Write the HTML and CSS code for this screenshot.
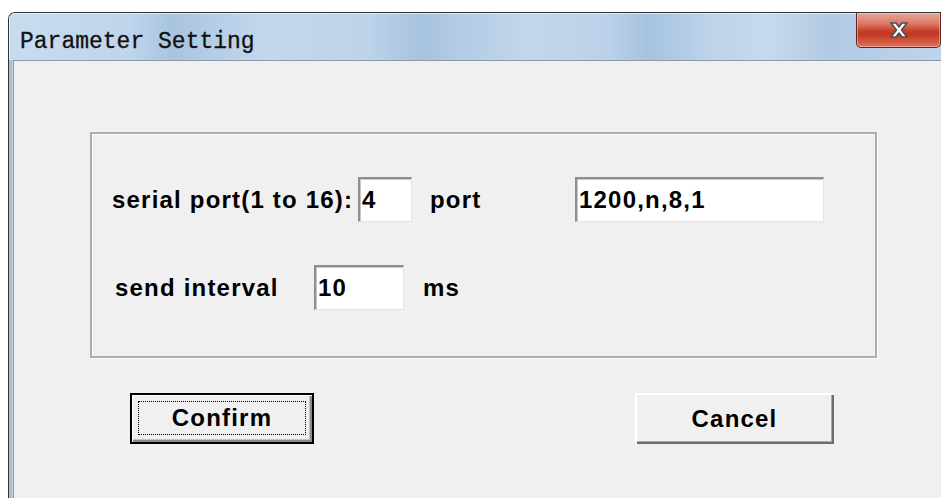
FILE: index.html
```html
<!DOCTYPE html>
<html lang="en">
<head>
<meta charset="utf-8">
<title>Parameter Setting</title>
<link rel="stylesheet" href="styles.css">
</head>
<body>
<div class="window">
  <div class="titlebar">
    <span class="title">Parameter Setting</span>
    <button class="close" type="button" aria-label="Close">
      <svg width="26" height="20" viewBox="0 0 26 20">
        <path d="M5 3 L10 3 L13 7 L16 3 L21 3 L15.5 10 L21 17 L16 17 L13 13 L10 17 L5 17 L10.5 10 Z" fill="#fff" stroke="#4a4f55" stroke-width="1.6" stroke-linejoin="round"/>
      </svg>
    </button>
  </div>
  <div class="client">
    <div class="group">
      <div class="row row-port">
        <span class="label label-serial">serial port(1 to 16):</span>
        <span class="field field-num">4</span>
        <span class="label label-port">port</span>
        <span class="field field-settings">1200,n,8,1</span>
      </div>
      <div class="row row-interval">
        <span class="label label-interval">send interval</span>
        <span class="field field-interval">10</span>
        <span class="label label-ms">ms</span>
      </div>
    </div>
    <div class="buttons">
      <button class="btn btn-default" type="button"><span class="focus">Confirm</span></button>
      <button class="btn btn-cancel" type="button">Cancel</button>
    </div>
  </div>
</div>
</body>
</html>
```

FILE: styles.css
```css
html, body {
  margin: 0;
  padding: 0;
  background: #ffffff;
  overflow: hidden;
  width: 941px;
  height: 498px;
}

/* The dialog continues past the right and bottom edges of the view */
.window {
  margin: 12px 0 0 8px;
  width: 933px;
  height: 486px;
  box-sizing: border-box;
  border: 1px solid #2f353b;
  border-right: none;
  border-bottom: none;
  border-radius: 7px 0 0 0;
  background: #aebccb;
  display: flex;
  flex-direction: column;
  overflow: hidden;
}

/* Aero-style glass caption */
.titlebar {
  height: 47px;
  flex: none;
  display: flex;
  align-items: flex-start;
  background:
    linear-gradient(90deg,
      #c9dcef 0px, #bfd5ec 120px, #a9c4df 165px, #b4cce5 200px,
      #c2d8ee 260px, #bcd3ea 360px, #a8c3de 410px, #b3cbe4 450px,
      #c1d7ec 520px, #bad1e9 600px, #a6c2de 640px, #bcd3ea 700px,
      #c6daee 760px, #b2cae3 820px, #bed4ea 932px);
  box-shadow: inset 0 1px 0 rgba(255,255,255,0.6), inset 1px 0 0 rgba(255,255,255,0.5);
}

.title {
  margin: 16px 0 0 11px;
  font-family: "Liberation Mono", "DejaVu Sans Mono", monospace;
  font-size: 23px;
  line-height: 26px;
  color: #111;
  -webkit-text-stroke: 0.3px #111;
  white-space: nowrap;
}

.close {
  margin: 0 0 0 auto;
  width: 85px;
  height: 35px;
  padding: 0;
  border: 1px solid #5e2a24;
  border-top: none;
  border-radius: 0 0 5px 5px;
  background: linear-gradient(180deg,
    #e8a497 0%, #dc7c6a 30%, #c9402a 52%, #c23621 62%, #d35a45 85%, #dc7764 100%);
  box-shadow: inset 0 0 0 1px rgba(255,220,210,0.45);
  display: flex;
  align-items: center;
  justify-content: center;
}

.client {
  flex: 1;
  margin: 0 0 0 4px;
  background: #f0f0f0;
  border-top: 1px solid #8c98a5;
  border-left: 1px solid #8c98a5;
  box-shadow: -1px 0 0 #c9d3dd;
  display: flex;
  flex-direction: column;
  font-family: "Liberation Sans", Arial, sans-serif;
  font-weight: bold;
  font-size: 24px;
  letter-spacing: 1.2px;
  color: #000;
}

/* Etched group frame */
.group {
  margin: 71px 0 0 76px;
  width: 787px;
  height: 226px;
  box-sizing: border-box;
  border: 2px solid #adadad;
  box-shadow: inset 1px 1px 0 #ffffff, 1px 1px 0 #ffffff;
  padding: 43px 0 0 20px;
  display: flex;
  flex-direction: column;
  gap: 43px;
}

.row {
  display: flex;
  align-items: center;
  height: 45px;
}

.label {
  white-space: nowrap;
  flex: none;
}

.label-serial { width: 246px; }
.label-port { width: 145px; margin-left: 18px; }
.row-interval { padding-left: 3px; }
.label-interval { width: 199px; }
.label-ms { margin-left: 19px; }

/* Sunken edit boxes */
.field {
  flex: none;
  height: 45px;
  box-sizing: border-box;
  background: #ffffff;
  border-style: solid;
  border-width: 2px 1px 1px 2px;
  border-color: #8f8f8f #e4e4e4 #e4e4e4 #8f8f8f;
  box-shadow: inset 1px 1px 0 #c8c8c8;
  padding: 0 0 0 2px;
  display: flex;
  align-items: center;
  white-space: nowrap;
}

.field-num { width: 54px; }
.field-settings { width: 249px; }
.field-interval { width: 90px; }

.buttons {
  display: flex;
  margin: 35px 0 0 116px;
}

.btn {
  height: 51px;
  box-sizing: border-box;
  padding: 0;
  background: #f0f0f0;
  font: inherit;
  letter-spacing: inherit;
  color: #000;
  display: flex;
  align-items: center;
  justify-content: center;
}

.btn-default {
  width: 184px;
  border: 2px solid #000;
  box-shadow: inset 1px 1px 0 #ffffff, inset -2px -2px 0 #8a8a8a, inset -3px -3px 0 #c4c4c4;
  padding: 6px 6px 7px 6px;
}

.focus {
  flex: 1;
  align-self: stretch;
  border: 1px dotted #000;
  display: flex;
  align-items: center;
  justify-content: center;
}

.btn-cancel {
  width: 199px;
  margin-left: 321px;
  border: none;
  box-shadow: inset 2px 2px 0 #ffffff, inset -2px -2px 0 #6e6e6e, inset -3px -3px 0 #a8a8a8;
}
```
